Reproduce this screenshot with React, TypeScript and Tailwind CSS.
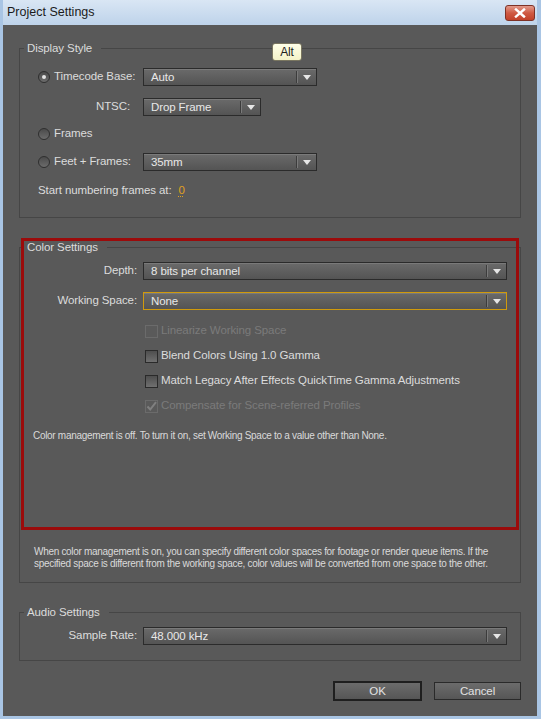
import React from 'react';

function Radio({ checked }: { checked?: boolean }) {
    return (
        <span className="w-[12px] h-[12px] rounded-full border border-[#2f2f2f] bg-gradient-to-b from-[#4b4b4b] to-[#6c6c6c] flex items-center justify-center shrink-0">
            {checked && <span className="w-[4px] h-[4px] rounded-full bg-[#e4e4e4]" />}
        </span>
    );
}

function Checkbox({ checked, disabled }: { checked?: boolean; disabled?: boolean }) {
    return (
        <span
            className={
                disabled
                    ? 'relative w-[13px] h-[13px] border border-[#6b6b6b] bg-[#5a5a5a] shrink-0'
                    : 'relative w-[13px] h-[13px] border border-[#2a2a2a] bg-gradient-to-b from-[#4e4e4e] to-[#707070] shrink-0'
            }
        >
            {checked && (
                <svg viewBox="0 0 13 13" className="absolute -left-px -top-px w-[13px] h-[13px]">
                    <path d="M2.5 6.5 L5.2 9.5 L11 2.2" fill="none" stroke="#808080" strokeWidth="2" />
                </svg>
            )}
        </span>
    );
}

function Dropdown({ value, width, focused }: { value: string; width: string; focused?: boolean }) {
    return (
        <div
            className={`${width} h-[18px] flex items-center border ${
                focused ? 'border-[#d09a0c]' : 'border-[#2b2b2b]'
            } bg-gradient-to-b from-[#6a6a6a] to-[#545454] shadow-[inset_0_1px_0_#7a7a7a]`}
        >
            <span className="flex-1 pl-[7px] text-[#e8e8e8] leading-4 truncate">{value}</span>
            <span className="w-px h-[12px] bg-[#3c3c3c] border-r border-[#7a7a7a] box-content" />
            <span className="w-[18px] flex items-center justify-center">
                <svg viewBox="0 0 8 5" className="w-[8px] h-[5px]">
                    <polygon points="0,0 8,0 4,5" fill="#e6e6e6" />
                </svg>
            </span>
        </div>
    );
}

export default function App() {
    const legend = 'ml-[4px] pl-[3px] pr-[9px] leading-4 text-[#dcdcdc]';

    return (
        <div className="w-[541px] h-[719px] flex flex-col border-l-[3px] border-r-[4px] border-b-[3px] border-[#a9c5e4] font-['Liberation_Sans',Arial,sans-serif] overflow-hidden">
            {/* title bar */}
            <div className="h-[25px] shrink-0 flex items-center justify-between pl-[4px] pr-[2px] bg-gradient-to-b from-[#d9e6f4] to-[#bed3ea]">
                <span className="text-[#1b1b1b] text-[12.5px]">Project Settings</span>
                <button className="w-[30px] h-[16px] mt-[1px] rounded-[3px] border border-[#7e3226] bg-gradient-to-b from-[#e29a8b] via-[#cf5a43] to-[#c24129] flex items-center justify-center">
                    <svg viewBox="0 0 12 10" className="w-[12px] h-[10px]">
                        <path d="M2 1.5 L10 8.5 M10 1.5 L2 8.5" stroke="#fff" strokeWidth="2.4" strokeLinecap="square" />
                    </svg>
                </button>
            </div>

            {/* body */}
            <div className="relative flex-1 bg-[#595959] px-4 pt-[15px] flex flex-col text-[#dcdcdc] text-[11.5px] tracking-[-0.1px]">
                {/* Display Style */}
                <fieldset className="h-[178px] border border-[#464646]">
                    <legend className={legend}>Display Style</legend>
                    <div className="pl-[18px] flex flex-col">
                        <div className="mt-[12px] h-[18px] flex items-center">
                            <div className="w-[105px] flex items-center gap-[4px]">
                                <Radio checked />
                                <span>Timecode Base:</span>
                            </div>
                            <Dropdown value="Auto" width="w-[174px]" />
                        </div>
                        <div className="mt-[12px] h-[18px] flex items-center">
                            <div className="w-[105px] text-right pr-[13px]">NTSC:</div>
                            <Dropdown value="Drop Frame" width="w-[118px]" />
                        </div>
                        <div className="mt-[9px] h-[18px] flex items-center gap-[4px]">
                            <Radio />
                            <span>Frames</span>
                        </div>
                        <div className="mt-[10px] h-[18px] flex items-center">
                            <div className="w-[105px] flex items-center gap-[4px]">
                                <Radio />
                                <span>Feet + Frames:</span>
                            </div>
                            <Dropdown value="35mm" width="w-[174px]" />
                        </div>
                        <div className="mt-[11px] h-[18px] flex items-center">
                            <span>Start numbering frames at:</span>
                            <span className="ml-[7px] text-[#e0a11f] underline decoration-dotted underline-offset-2">0</span>
                        </div>
                    </div>
                </fieldset>

                {/* Color Settings */}
                <div className="relative mt-[21px]">
                    <fieldset className="h-[344px] border border-[#464646]">
                        <legend className={legend}>Color Settings</legend>
                        <div className="flex flex-col">
                            <div className="mt-[7px] h-[18px] flex items-center">
                                <span className="w-[117px] text-right">Depth:</span>
                                <div className="ml-[6px]">
                                    <Dropdown value="8 bits per channel" width="w-[364px]" />
                                </div>
                            </div>
                            <div className="mt-[12px] h-[18px] flex items-center">
                                <span className="w-[117px] text-right">Working Space:</span>
                                <div className="ml-[6px]">
                                    <Dropdown value="None" width="w-[364px]" focused />
                                </div>
                            </div>
                            <div className="mt-[12px] h-[18px] pl-[125px] flex items-center gap-[3px] text-[#7b7b7b]">
                                <Checkbox disabled />
                                <span>Linearize Working Space</span>
                            </div>
                            <div className="mt-[7px] h-[18px] pl-[125px] flex items-center gap-[3px]">
                                <Checkbox />
                                <span>Blend Colors Using 1.0 Gamma</span>
                            </div>
                            <div className="mt-[7px] h-[18px] pl-[125px] flex items-center gap-[3px]">
                                <Checkbox />
                                <span>Match Legacy After Effects QuickTime Gamma Adjustments</span>
                            </div>
                            <div className="mt-[7px] h-[18px] pl-[125px] flex items-center gap-[3px] text-[#7b7b7b]">
                                <Checkbox disabled checked />
                                <span>Compensate for Scene-referred Profiles</span>
                            </div>
                            <p className="mt-[14px] pl-[13px] leading-[14px] text-[10px] tracking-[-0.3px] text-[#dadada]">
                                Color management is off. To turn it on, set Working Space to a value other than None.
                            </p>
                            <p className="mt-[103px] pl-[14px] pr-[10px] leading-[12px] text-[10px] tracking-[-0.3px] text-[#dadada]">
                                When color management is on, you can specify different color spaces for footage or render queue items. If the
                                specified space is different from the working space, color values will be converted from one space to the other.
                            </p>
                        </div>
                    </fieldset>
                    <div className="absolute top-[-1px] left-[2px] w-[498px] h-[292px] border-[3px] border-[#9b0b0b] pointer-events-none" />
                </div>

                {/* Audio Settings */}
                <fieldset className="mt-[21px] h-[57px] border border-[#464646]">
                    <legend className={legend}>Audio Settings</legend>
                    <div className="mt-[7px] h-[18px] flex items-center">
                        <span className="w-[117px] text-right">Sample Rate:</span>
                        <div className="ml-[6px]">
                            <Dropdown value="48.000 kHz" width="w-[364px]" />
                        </div>
                    </div>
                </fieldset>

                {/* buttons */}
                <div className="mt-[20px] flex justify-end items-center gap-[12px]">
                    <button className="w-[89px] h-[20px] border-2 border-[#1f1f1f] bg-gradient-to-b from-[#6c6c6c] to-[#565656] text-[#e2e2e2] leading-4">
                        OK
                    </button>
                    <button className="w-[87px] h-[18px] border border-[#2a2a2a] bg-gradient-to-b from-[#6c6c6c] to-[#565656] text-[#e2e2e2] leading-4">
                        Cancel
                    </button>
                </div>

                {/* tooltip */}
                <div className="absolute left-[269px] top-[18px] w-[30px] h-[18px] rounded-[3px] border border-[#7a7660] bg-gradient-to-b from-[#ffffe8] to-[#f4f2c8] text-[#1e1e1e] text-[12px] flex items-center justify-center">
                    Alt
                </div>
            </div>
        </div>
    );
}
